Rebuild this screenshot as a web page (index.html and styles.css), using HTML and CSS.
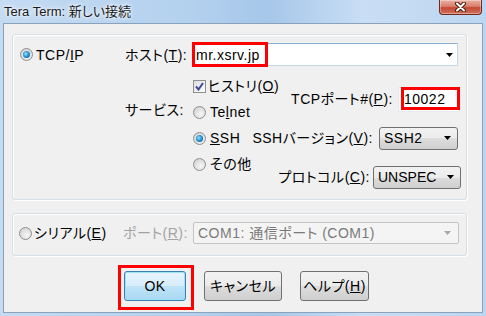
FILE: index.html
```html
<!DOCTYPE html>
<html lang="ja">
	<head>
		<meta charset="utf-8" />
		<title>Tera Term: 新しい接続</title>
		<link rel="stylesheet" href="styles.css">
	</head>
	<body>
		<div class="window">
			<div class="titlebar">
				<span class="title">Tera Term: 新しい接続</span>
				<span class="close">
					<svg width="13" height="10" viewBox="0 0 13 10">
						<path d="M3 1.5 L10 8.5 M10 1.5 L3 8.5" stroke="#4a1c14" stroke-width="4" stroke-linecap="round" />
						<path d="M3 1.5 L10 8.5 M10 1.5 L3 8.5" stroke="#ffffff" stroke-width="2" stroke-linecap="round" />
					</svg>
				</span>
			</div>
			<div class="client">
				<div class="group tcp">
					<div class="host-row">
						<span class="choice proto"><span class="radio on"></span><span>TCP/<u>I</u>P</span></span>
						<span class="field-label">ホスト(<u>T</u>):</span>
						<div class="combo edit host">
							<span>mr.xsrv.jp</span>
							<svg class="arrow" width="7" height="4" viewBox="0 0 7 4"><path d="M0 0 H7 L3.5 4 Z" fill="#000" /></svg>
							<span class="mark host-mark"></span>
						</div>
					</div>
					<div class="service">
						<span class="service-label">サービス:</span>
						<span class="choice item history">
							<span class="check">
								<svg width="9" height="9" viewBox="0 0 9 9"><path d="M1 4.5 L3.5 7.5 L8 1" fill="none" stroke="#3a4c94" stroke-width="2" /></svg>
							</span>
							<span>ヒストリ(<u>O</u>)</span>
						</span>
						<span class="choice item telnet"><span class="radio"></span><span>Te<u>l</u>net</span></span>
						<span class="choice item ssh"><span class="radio on"></span><span><u>S</u>SH</span></span>
						<span class="choice item other"><span class="radio"></span><span>その他</span></span>
						<span class="setting port">
							<span>TCPポート#(<u>P</u>):</span>
							<span class="edit port-edit">10022<span class="mark port-mark"></span></span>
						</span>
						<span class="setting version">
							<span>SSHバージョン(<u>V</u>):</span>
							<span class="combo dropdown version-box">SSH2<svg class="arrow" width="7" height="4" viewBox="0 0 7 4"><path d="M0 0 H7 L3.5 4 Z" fill="#000" /></svg></span>
						</span>
						<span class="setting protocol">
							<span>プロトコル(<u>C</u>):</span>
							<span class="combo dropdown protocol-box">UNSPEC<svg class="arrow" width="7" height="4" viewBox="0 0 7 4"><path d="M0 0 H7 L3.5 4 Z" fill="#000" /></svg></span>
						</span>
					</div>
				</div>
				<div class="group serial">
					<span class="choice serial-choice"><span class="radio"></span><span>シリアル(<u>E</u>)</span></span>
					<span class="field-label disabled-label">ポート(<u>R</u>):</span>
					<span class="combo com-box">COM1: 通信ポート (COM1)<svg class="arrow" width="7" height="4" viewBox="0 0 7 4"><path d="M0 0 H7 L3.5 4 Z" fill="#a8a8a8" /></svg></span>
				</div>
				<div class="buttons">
					<span class="ok-mark"><span class="button ok">OK</span></span>
					<span class="button cancel">キャンセル</span>
					<span class="button help">ヘルプ(<u>H</u>)</span>
				</div>
			</div>
		</div>
	</body>
</html>
```

FILE: styles.css
```css
body {
	margin: 0;
	width: 486px;
	height: 316px;
	overflow: hidden;
	color: #000000;
	font-family: "Liberation Sans", "Noto Sans CJK JP", sans-serif;
	font-size: 14px;
	font-feature-settings: "palt";
	letter-spacing: 0.5px;
	line-height: 16px;
}

.window {
	box-sizing: border-box;
	display: flex;
	flex-direction: column;
	height: 316px;
	padding: 0 3px 3px 3px;
	background: linear-gradient(to right, #c4dbf2, #b3d0ee 40%, #a6c7ea 55%, #c9def4 75%, #bcd5f0);
}

.titlebar {
	display: flex;
	height: 23px;
	margin: 0 -3px;
	padding-left: 4px;
}

.title {
	font-size: 13px;
	letter-spacing: 0;
	padding-top: 4px;
	color: #1a1a1a;
	text-shadow: 0 0 6px #ffffff, 0 0 3px #ffffff;
}

.close {
	box-sizing: border-box;
	display: flex;
	align-items: center;
	justify-content: center;
	width: 43px;
	height: 15px;
	margin: 0 4px 0 auto;
	border: 1px solid #6e2a1e;
	border-top: none;
	border-radius: 0 0 4px 4px;
	background: linear-gradient(#eab0a3, #d9806c 45%, #c44a34 55%, #d0705b);
	box-shadow: inset 0 0 0 1px rgba(255, 255, 255, 0.35);
}

.client {
	flex: 1;
	padding: 10px 0 0 8px;
	border: 1px solid #8aa2bb;
	background: #f0f0f0;
}

.group {
	box-sizing: border-box;
	width: 455px;
	border: 1px solid #d5dfe5;
	border-radius: 3px;
	box-shadow: inset 1px 1px 0 #ffffff, 1px 1px 0 #ffffff;
}

.tcp {
	padding: 8px 7px 9px 7px;
}

.host-row {
	display: flex;
	align-items: center;
	height: 23px;
}

.choice {
	display: flex;
	align-items: center;
	gap: 3px;
	white-space: nowrap;
}

.proto {
	width: 105px;
}

.field-label {
	width: 67px;
	white-space: nowrap;
}

.radio {
	position: relative;
	box-sizing: border-box;
	flex: none;
	width: 13px;
	height: 13px;
	border: 1px solid #8e8f8f;
	border-radius: 50%;
	background: radial-gradient(circle at 60% 65%, #f7f7f7, #d8d8d8 70%, #c6c6c6);
}

.radio.on:after {
	content: "";
	position: absolute;
	left: 2px;
	top: 2px;
	width: 7px;
	height: 7px;
	border-radius: 50%;
	background: radial-gradient(circle at 40% 40%, #9fe2ff, #1f8fd0 50%, #0d4a7e);
}

.check {
	box-sizing: border-box;
	display: flex;
	align-items: center;
	justify-content: center;
	flex: none;
	width: 13px;
	height: 13px;
	border: 1px solid #8e8f8f;
	background: linear-gradient(135deg, #dcdcdc, #ffffff);
}

.combo {
	position: relative;
	box-sizing: border-box;
	display: flex;
	align-items: center;
	height: 23px;
	white-space: nowrap;
}

.arrow {
	flex: none;
	margin-left: auto;
}

.edit {
	background: #ffffff;
}

.host {
	width: 266px;
	padding: 0 4px 0 3px;
	border: 1px solid #c2d6ea;
	border-top-color: #8fb0d2;
}

.mark {
	position: absolute;
	box-sizing: border-box;
	border: 3px solid #ff0000;
}

.host-mark {
	left: -1px;
	top: -2px;
	width: 76px;
	height: 25px;
}

.service {
	display: grid;
	grid-template-columns: 105px 67px 266px;
	grid-template-rows: repeat(9, 13px);
	margin-top: 7px;
}

.service-label {
	grid-column: 2;
	grid-row: 3 / 5;
	align-self: center;
	margin-bottom: 4px;
	white-space: nowrap;
}

.item {
	grid-column: 3;
	justify-self: start;
	align-self: center;
	gap: 4px;
	margin-left: 1px;
}

.history {
	grid-row: 1 / 3;
	gap: 2px;
}

.telnet {
	grid-row: 3 / 5;
}

.ssh {
	grid-row: 5 / 7;
}

.other {
	grid-row: 7 / 9;
}

.setting {
	grid-column: 3;
	justify-self: end;
	align-self: center;
	display: flex;
	align-items: center;
	white-space: nowrap;
}

.port {
	grid-row: 2 / 4;
	gap: 5px;
	margin-right: -2px;
}

.port-edit {
	position: relative;
	box-sizing: border-box;
	display: flex;
	align-items: center;
	width: 62px;
	height: 25px;
	padding-left: 5px;
	border: 1px solid #e6ebf0;
}

.port-mark {
	left: 2px;
	top: -1px;
	width: 59px;
	height: 23px;
}

.version {
	grid-row: 5 / 7;
	gap: 6px;
}

.protocol {
	grid-row: 8 / 10;
	gap: 3px;
	margin-right: -3px;
}

.dropdown {
	padding: 0 6px 0 4px;
	border: 1px solid #707070;
	border-radius: 3px;
	background: linear-gradient(#f2f2f2, #ebebeb 50%, #dddddd 50%, #cfcfcf);
}

.version-box {
	width: 79px;
}

.protocol-box {
	width: 88px;
	letter-spacing: 0;
}

.serial {
	display: flex;
	align-items: center;
	margin-top: 13px;
	padding: 8px 6px 11px 6px;
}

.serial-choice {
	width: 104px;
	gap: 2px;
}

.disabled-label {
	width: 70px;
	color: #a3a3a3;
}

.com-box {
	width: 266px;
	height: 22px;
	padding: 0 7px 0 4px;
	border: 1px solid #c4c4c4;
	border-radius: 2px;
	background: #f4f4f4;
	color: #7a7a7a;
}

.buttons {
	display: flex;
	align-items: flex-start;
	margin: 9px 0 0 106px;
}

.ok-mark {
	display: block;
	padding: 3px 5px 6px 3px;
	border: 3px solid #ff0000;
}

.button {
	box-sizing: border-box;
	display: flex;
	align-items: center;
	justify-content: center;
	height: 30px;
	border: 1px solid #707070;
	border-radius: 3px;
	background: linear-gradient(#f2f2f2, #ebebeb 50%, #dddddd 50%, #cfcfcf);
	white-space: nowrap;
}

.ok {
	width: 62px;
	border-color: #3c7fb1;
	background: linear-gradient(#e8f5fc, #d7eefb 50%, #bfe4f8 50%, #a9d8f2);
	box-shadow: inset 0 0 0 1px #9fe3fa;
}

.cancel {
	width: 78px;
	margin: 6px 0 0 10px;
}

.help {
	width: 69px;
	margin: 6px 0 0 18px;
}
```
